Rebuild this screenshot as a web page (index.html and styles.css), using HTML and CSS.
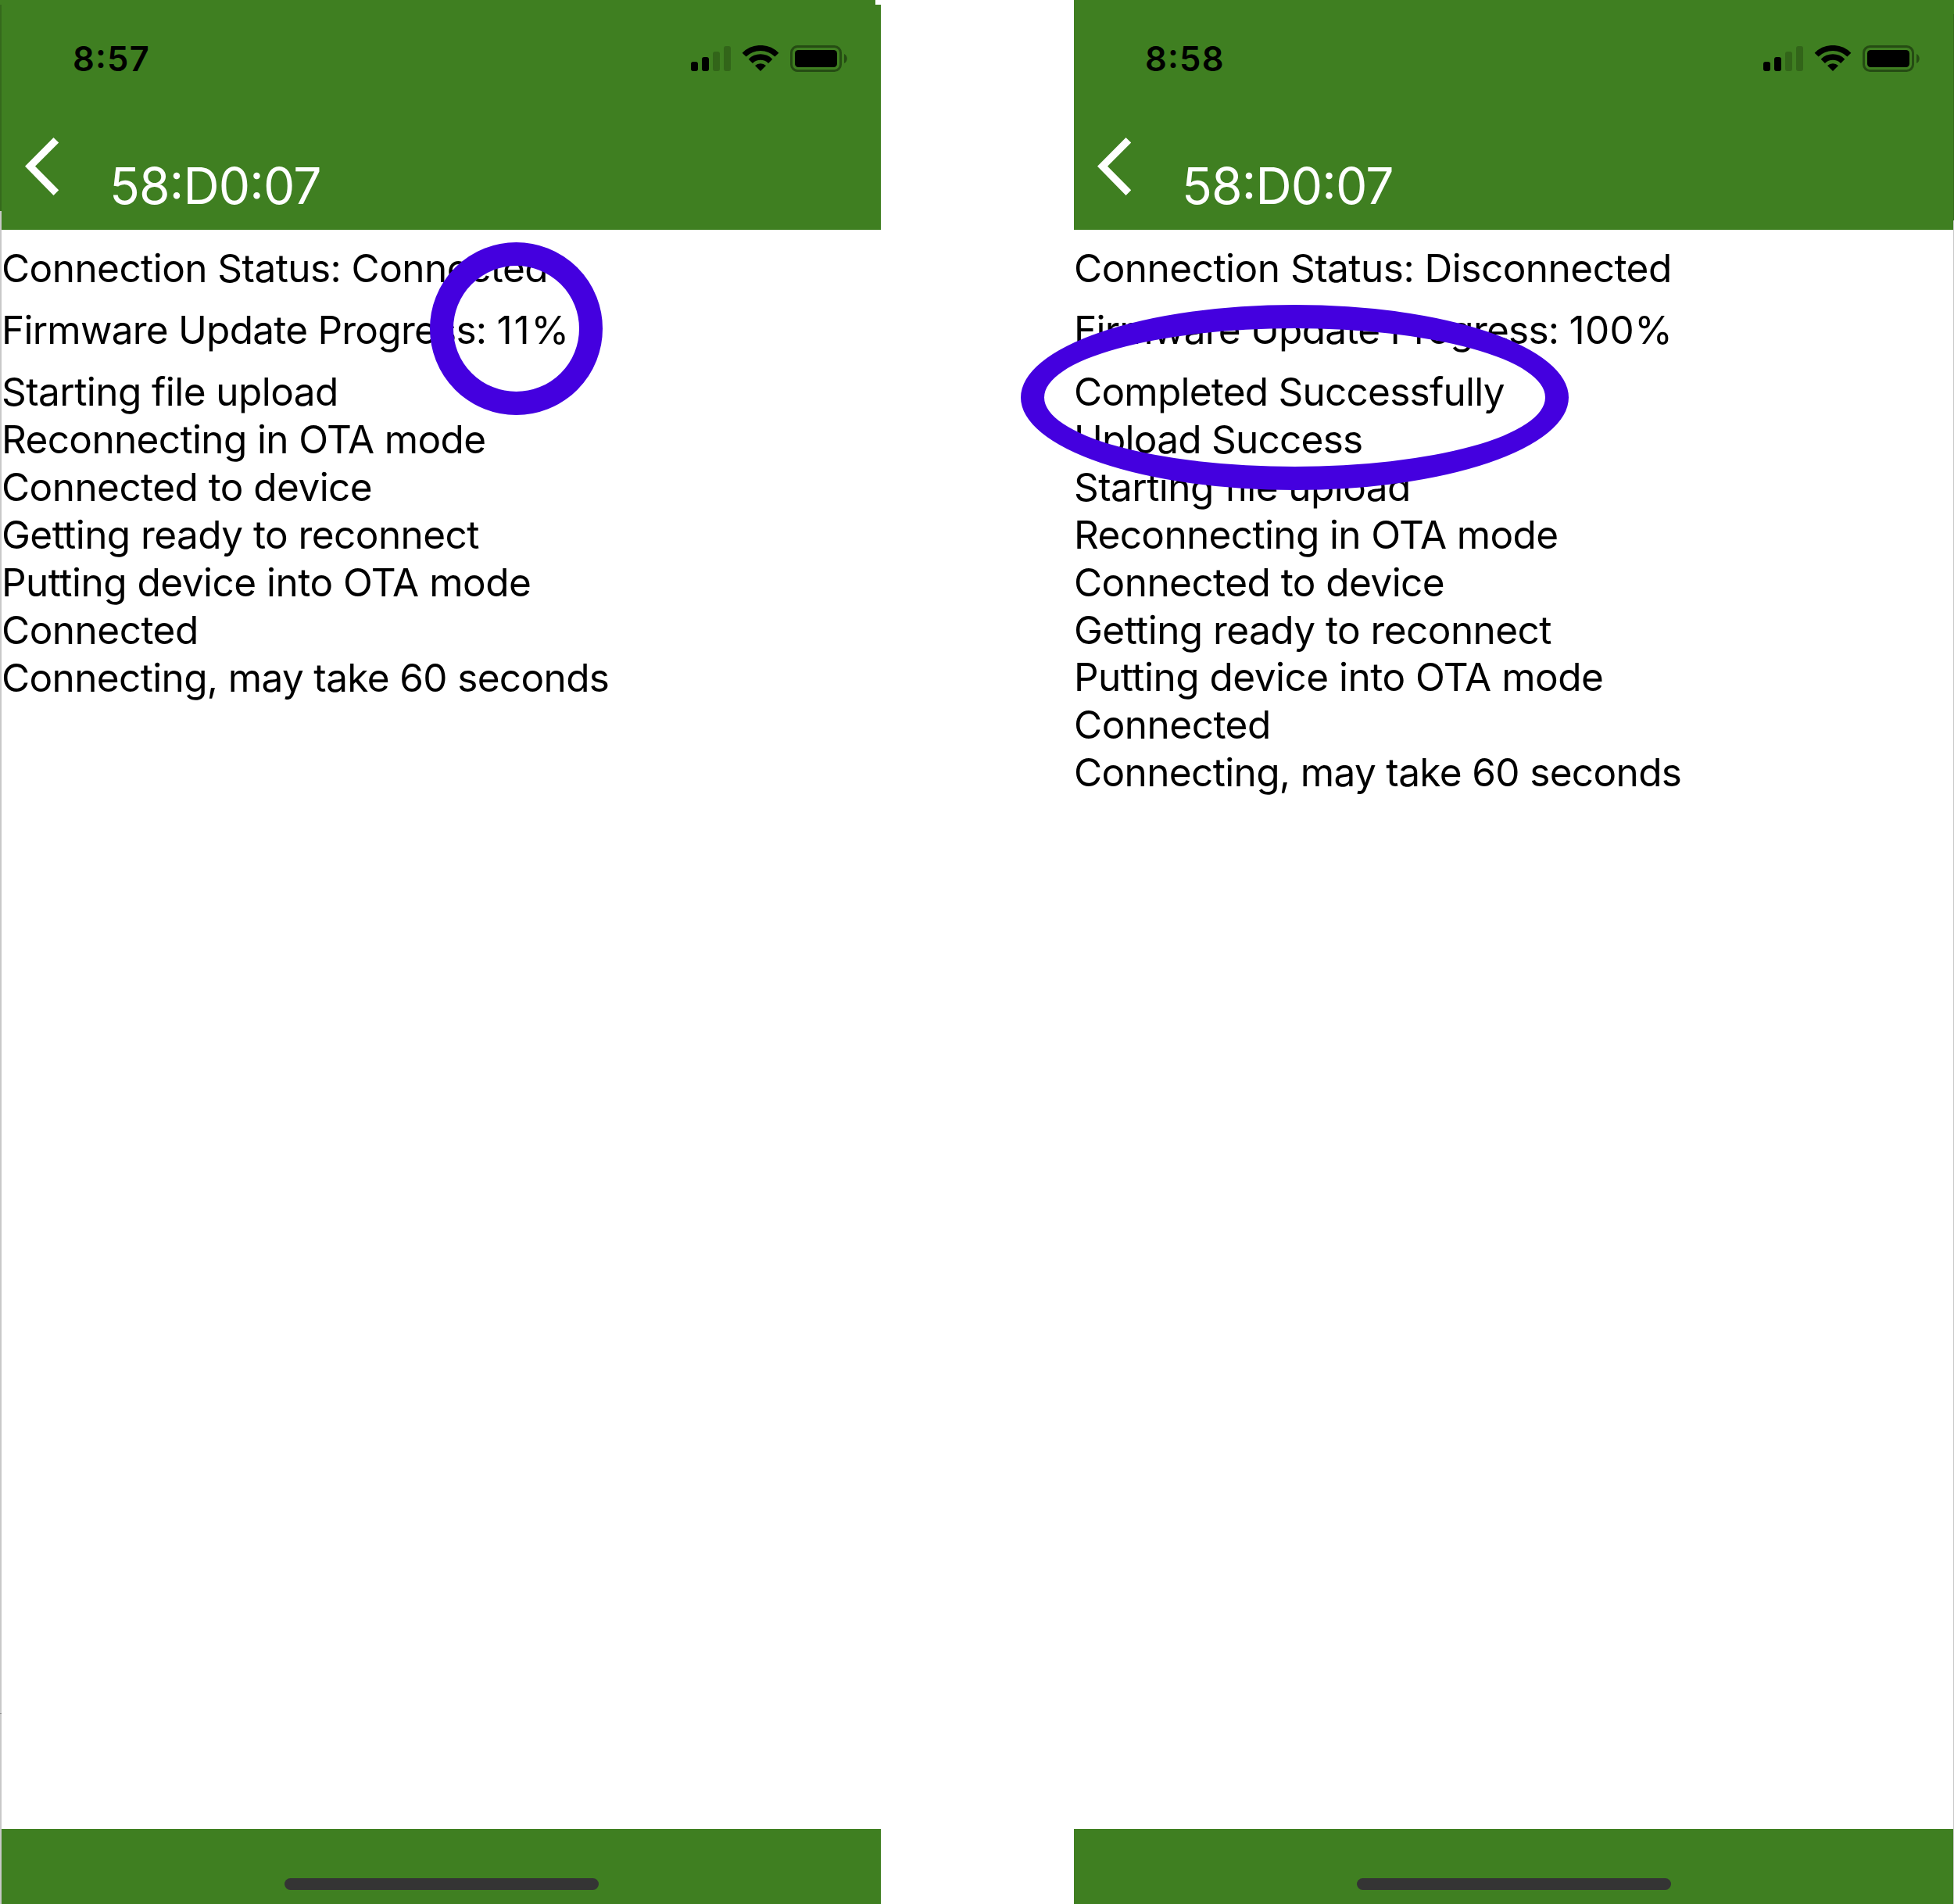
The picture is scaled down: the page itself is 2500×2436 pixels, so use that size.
FILE: index.html
```
<!DOCTYPE html>
<html lang="en">
<head>
<meta charset="utf-8">
<title>Firmware Update</title>
<link rel="stylesheet" href="styles.css">
</head>
<body>
<svg width="0" height="0" class="defs" aria-hidden="true">
  <symbol id="status" viewBox="0 0 200 34">
    <rect x="0" y="21" width="9" height="12" rx="3"/>
    <rect x="14" y="15" width="9" height="18" rx="3"/>
    <rect x="28" y="8" width="9" height="25" rx="3" fill="#326519"/>
    <rect x="42" y="1" width="9" height="32" rx="3" fill="#326519"/>
    <path d="M68.1 12.1A29.5 29.5 0 0 1 109.9 12.1" fill="none" stroke="#000" stroke-width="7"/>
    <path d="M76.3 20.3A18 18 0 0 1 101.7 20.3" fill="none" stroke="#000" stroke-width="7.4"/>
    <path d="M89 33L82 26A10 10 0 0 1 96 26Z"/>
    <rect x="128.5" y="1.5" width="63" height="31" rx="8" fill="none" stroke="#254c13" stroke-width="3"/>
    <rect x="133" y="6" width="54" height="22" rx="4.5"/>
    <path d="M196 11C201 13 201 21 196 23Z" fill="#254c13"/>
  </symbol>
  <symbol id="back" viewBox="0 0 44 74">
    <path d="M0 36.8L36.5 0L43.2 6.5L13 36.8L43.2 67.2L36.5 74Z" fill="#fff"/>
  </symbol>
</svg>
<main class="stage">
  <section class="phone first">
    <header class="head">
      <div class="bar"><span class="time">8:57</span><svg class="status"><use href="#status"/></svg></div>
      <div class="nav"><svg class="back"><use href="#back"/></svg><h1 class="title">58:D0:07</h1></div>
    </header>
    <div class="content">
      <p>Connection Status: Connected</p>
      <p class="tighter">Firmware Update Progress: <span class="value short">11%</span></p>
      <ul class="log">
        <li>Starting file upload</li>
        <li class="tight">Reconnecting in OTA mode</li>
        <li>Connected to device</li>
        <li>Getting ready to reconnect</li>
        <li class="loose">Putting device into OTA mode</li>
        <li class="loose">Connected</li>
        <li class="tight">Connecting, may take 60 seconds</li>
      </ul>
      <div class="ring circle"></div>
    </div>
    <footer class="foot"><div class="home"></div></footer>
  </section>
  <section class="phone second">
    <header class="head">
      <div class="bar"><span class="time">8:58</span><svg class="status"><use href="#status"/></svg></div>
      <div class="nav"><svg class="back"><use href="#back"/></svg><h1 class="title">58:D0:07</h1></div>
    </header>
    <div class="content">
      <p class="loose">Connection Status: Disconnected</p>
      <p class="tighter">Firmware Update Progress: <span class="value">100%</span></p>
      <ul class="log">
        <li class="tighter">Completed Successfully</li>
        <li class="tighter">Upload Success</li>
        <li>Starting file upload</li>
        <li class="tight">Reconnecting in OTA mode</li>
        <li>Connected to device</li>
        <li>Getting ready to reconnect</li>
        <li class="loose">Putting device into OTA mode</li>
        <li class="loose">Connected</li>
        <li class="tight">Connecting, may take 60 seconds</li>
      </ul>
      <div class="ring oval"></div>
    </div>
    <footer class="foot"><div class="home"></div></footer>
  </section>
</main>
</body>
</html>
```
FILE: styles.css
```
* { box-sizing: border-box; }
html { overflow: hidden; }
body { margin: 0; background: #fff; font-family: Inter, sans-serif; color: #000; }
h1, p, ul { margin: 0; padding: 0; font-weight: 400; list-style: none; }
.defs { position: absolute; }

.stage { display: flex; justify-content: space-between; width: 2500px; height: 2436px; }
.phone { position: relative; display: flex; flex-direction: column; height: 2436px; }

/* thin edge lines along the outer sides of the two screens */
.first {
  width: 1127px;
  padding-left: 2px;
  background:
    linear-gradient(#888, #888) 0 2192px / 2px 1px no-repeat,
    linear-gradient(#3f7f21 6px, #35691c 6px 270px, #c8c8c8 270px) 0 0 / 2px 100% no-repeat;
}
.second {
  width: 1126px;
  padding-right: 1px;
  background: linear-gradient(#3f7f21 18px, #35691c 18px 282px, #c8c8c8 282px) 100% 0 / 1px 100% no-repeat;
}
.first::after {
  content: "";
  position: absolute;
  top: 0;
  right: 0;
  width: 7px;
  height: 6px;
  background: #fff;
}

.head { height: 294px; background: #3f7f21; }
.bar {
  display: flex;
  justify-content: space-between;
  align-items: center;
  height: 150px;
  padding: 0 43px 0 91px;
}
.time {
  font-size: 43.5px;
  font-weight: 600;
  line-height: 52px;
  letter-spacing: 1.2px;
  font-feature-settings: "case";
}
.status { width: 200px; height: 34px; }
.nav { display: flex; align-items: flex-start; padding: 26px 0 0 30px; }
.back { width: 44px; height: 74px; flex: none; }
.title {
  margin: 23px 0 0 64px;
  color: #fff;
  font-size: 64px;
  line-height: 78px;
  letter-spacing: -0.83px;
  font-feature-settings: "case";
}

.content {
  flex: 1;
  position: relative;
  display: flex;
  flex-direction: column;
  gap: 18px;
  padding-top: 19px;
  font-size: 49.5px;
  line-height: 61px;
  letter-spacing: -0.56px;
  white-space: nowrap;
}
.second .log { line-height: 60.9px; }
.loose { letter-spacing: -0.51px; }
.tight { letter-spacing: -0.64px; }
.tighter { letter-spacing: -0.76px; }
.value { letter-spacing: 0.4px; }
.short { letter-spacing: 1.9px; }

.ring { position: absolute; border: 30px solid #4400df; border-radius: 50%; }
.circle { left: 548px; top: 16px; width: 221px; height: 221px; }
.oval { left: -68px; top: 96px; width: 701px; height: 237px; }

.foot { height: 96px; padding-top: 63px; background: #3f7f21; }
.home { width: 402px; height: 15px; margin: 0 auto; border-radius: 8px; background: #343434; }
```
